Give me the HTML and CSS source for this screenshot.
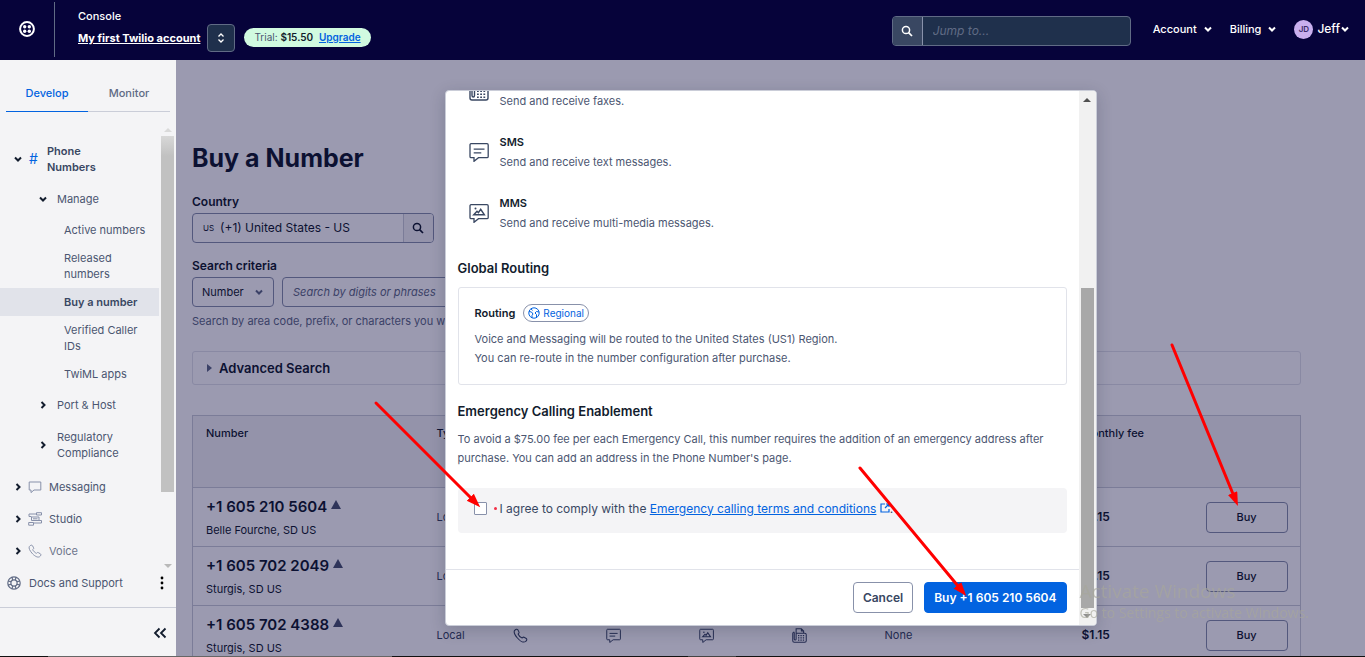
FILE: index.html
```html
<!DOCTYPE html>
<html lang="en">
<head>
  <meta charset="UTF-8">
  <title>Buy a Number</title>
  <meta name="viewport" content="width=device-width, initial-scale=1.0">
  <link rel="stylesheet" href="styles.css">
</head>
<body>
  <!-- shared icons -->
  <svg class="defs" width="0" height="0" aria-hidden="true">
    <symbol id="chevron" viewBox="0 0 10 10"><path d="M2 3.5 L5 6.5 L8 3.5" fill="none" stroke="currentColor" stroke-width="2"/></symbol>
    <symbol id="search" viewBox="0 0 12 12"><circle cx="5" cy="5" r="3.6" fill="none" stroke="currentColor" stroke-width="1.5"/><path d="M7.6 7.6 L11 11" stroke="currentColor" stroke-width="1.7"/></symbol>
    <symbol id="phone" viewBox="0 0 20 20"><path d="M2 3.5 C3.5 1.5 5.5 1 6.5 2.5 L8 5.5 C8.5 6.8 7.5 7.3 6.8 8 C7.5 10 10 12.5 12.2 13.3 C13 12.5 13.6 11.7 14.7 12.3 L17.7 14 C19 15 18.4 17 16.5 18.2 C13.5 20 8.5 16.5 5.6 13 C2.8 9.6 0.5 6 2 3.5 Z" fill="none" stroke="currentColor" stroke-width="1.4"/></symbol>
    <symbol id="sms" viewBox="0 0 20 20"><path d="M2 1.7 H18 Q19.2 1.7 19.2 3 V14.5 Q19.2 15.7 18 15.7 H9.5 L5 19.3 V15.7 H2 Q1 15.7 1 14.5 V3 Q1 1.7 2 1.7 Z M4.7 7.2 H15.5 M4.7 10.8 H12.3" fill="none" stroke="currentColor" stroke-width="1.3"/></symbol>
    <symbol id="mms" viewBox="0 0 20 20"><path d="M2 1.7 H18 Q19.2 1.7 19.2 3 V14.5 Q19.2 15.7 18 15.7 H9.5 L5 19.3 V15.7 H2 Q1 15.7 1 14.5 V3 Q1 1.7 2 1.7 Z" fill="none" stroke="currentColor" stroke-width="1.3"/><path d="M4.8 11.7 L8 8.3 L9.4 9.7 L11.7 6.3 L15.3 11.7 Z" fill="none" stroke="currentColor" stroke-width="1.5"/><circle cx="6.5" cy="5.5" r="1" fill="currentColor"/></symbol>
    <symbol id="fax" viewBox="0 0 20 20"><path d="M5.5 7 V1 H12.5 L15.5 4 V7 M12.5 1 V4 H15.5 M3 5.5 Q1 5.5 1 7.5 V17 Q1 19 3 19 H17 Q19 19 19 17 V9 Q19 7 17 7 H5.5 V14.5 Q5.5 16 4.3 16 Q3 16 3 14.5 V5.5" fill="none" stroke="currentColor" stroke-width="1.4"/><path d="M8 10.2 H17 M8 13.2 H17 M8 16.2 H17" stroke="currentColor" stroke-width="1.6" stroke-dasharray="1.8 1.4"/></symbol>
  </svg>

  <header class="topbar">
    <a class="logo" href="#" aria-label="Home">
      <svg width="16" height="16" viewBox="0 0 16 16"><circle cx="8" cy="8" r="6.9" fill="none" stroke="#fff" stroke-width="2"/><circle cx="5.7" cy="5.7" r="1.7" fill="#fff"/><circle cx="10.3" cy="5.7" r="1.7" fill="#fff"/><circle cx="5.7" cy="10.3" r="1.7" fill="#fff"/><circle cx="10.3" cy="10.3" r="1.7" fill="#fff"/></svg>
    </a>
    <div class="account">
      <span class="account-label">Console</span>
      <a class="account-name" href="#">My first Twilio account</a>
    </div>
    <button class="switcher" aria-label="Switch account">
      <svg width="10" height="12" viewBox="0 0 10 12"><path d="M2.5 4.5 L5 2 L7.5 4.5 M2.5 7.5 L5 10 L7.5 7.5" fill="none" stroke="#fff" stroke-width="1.3"/></svg>
    </button>
    <div class="trial">Trial: <b>$15.50</b> <a href="#">Upgrade</a></div>
    <div class="jump">
      <label for="jump" aria-label="Jump to"><svg width="12" height="12"><use href="#search"/></svg></label>
      <input type="text" id="jump" placeholder="Jump to...">
    </div>
    <button class="top-menu">Account <svg width="10" height="10"><use href="#chevron"/></svg></button>
    <button class="top-menu">Billing <svg width="10" height="10"><use href="#chevron"/></svg></button>
    <button class="top-menu user"><span class="avatar">JD</span>Jeff <svg width="10" height="10"><use href="#chevron"/></svg></button>
  </header>

  <div class="shell">
    <aside class="sidebar">
      <div class="tabs">
        <a class="tab active" href="#">Develop</a>
        <a class="tab" href="#">Monitor</a>
      </div>
      <div class="nav-wrap">
        <nav class="nav">
          <a class="item strong" href="#"><svg class="chev" width="10" height="10"><use href="#chevron"/></svg><span class="hash">#</span><span>Phone Numbers</span></a>
          <a class="item level2" href="#"><svg class="chev" width="10" height="10"><use href="#chevron"/></svg><span>Manage</span></a>
          <div class="sub">
            <a href="#">Active numbers</a>
            <a href="#">Released numbers</a>
            <a class="current" href="#">Buy a number</a>
            <a href="#">Verified Caller IDs</a>
            <a href="#">TwiML apps</a>
          </div>
          <a class="item level2" href="#"><svg class="chev right" width="10" height="10"><use href="#chevron"/></svg><span>Port &amp; Host</span></a>
          <a class="item level2" href="#"><svg class="chev right" width="10" height="10"><use href="#chevron"/></svg><span>Regulatory Compliance</span></a>
          <div class="products">
            <a class="item" href="#"><svg class="chev right" width="10" height="10"><use href="#chevron"/></svg><svg class="picto" width="14" height="14" viewBox="0 0 14 14"><path d="M1.2 2 H12.8 V10 H6 L3 12.6 V10 H1.2 Z" fill="none" stroke="currentColor" stroke-linejoin="round"/></svg><span>Messaging</span></a>
            <a class="item" href="#"><svg class="chev right" width="10" height="10"><use href="#chevron"/></svg><svg class="picto" width="14" height="14" viewBox="0 0 14 14"><path d="M8.5 .7 H13.5 V3 H8.5 Z M8.5 2 H1 V4.5 H3.5 M3.5 5 H11 V8.5 H3.5 Z M5 6.8 H9.5 M11 8.5 H13.5 V11 H5.5 M.7 10.5 H5.5 V13.2 H.7 Z" fill="none" stroke="currentColor"/></svg><span>Studio</span></a>
            <a class="item faded" href="#"><svg class="chev right" width="10" height="10"><use href="#chevron"/></svg><svg class="picto" width="14" height="14"><use href="#phone"/></svg><span>Voice</span></a>
          </div>
        </nav>
        <div class="nav-scroll"><i class="up"></i><i class="thumb"></i><i class="down"></i></div>
      </div>
      <div class="docs">
        <svg width="14" height="14" viewBox="0 0 14 14"><g fill="none" stroke="#606b85" stroke-width="1.2"><circle cx="7" cy="7" r="6.2"/><circle cx="7" cy="7" r="3.1"/><path d="M5 .9 L5.6 4 M9 .9 L8.4 4 M5 13.1 L5.6 10 M9 13.1 L8.4 10 M.9 5 L4 5.6 M.9 9 L4 8.4 M13.1 5 L10 5.6 M13.1 9 L10 8.4"/></g></svg>
        <a href="#">Docs and Support</a>
        <button aria-label="More"><svg width="4" height="14" viewBox="0 0 4 14"><circle cx="2" cy="2" r="1.4"/><circle cx="2" cy="7" r="1.4"/><circle cx="2" cy="12" r="1.4"/></svg></button>
      </div>
      <div class="collapse">
        <button aria-label="Collapse menu"><svg width="14" height="12" viewBox="0 0 14 12"><path d="M6.5 1.5 L2 6 L6.5 10.5 M12.5 1.5 L8 6 L12.5 10.5" fill="none" stroke="#121c2d" stroke-width="1.8"/></svg></button>
      </div>
    </aside>

    <div class="stage">
      <main class="page">
        <h1>Buy a Number</h1>
        <label class="field-label" for="country">Country</label>
        <div class="country">
          <span>US</span>
          <input type="text" id="country" value="(+1) United States - US">
          <button aria-label="Search country"><svg width="12" height="12"><use href="#search"/></svg></button>
        </div>
        <label class="field-label" for="digits">Search criteria</label>
        <div class="criteria">
          <div class="select">
            <select aria-label="Search by"><option>Number</option></select>
            <svg width="10" height="10"><use href="#chevron"/></svg>
          </div>
          <input type="text" id="digits" placeholder="Search by digits or phrases">
        </div>
        <p class="help">Search by area code, prefix, or characters you want in your phone number.</p>
        <details class="advanced"><summary>Advanced Search</summary></details>

        <table class="numbers">
          <thead>
            <tr>
              <th class="c-number">Number</th><th class="c-type">Type</th><th class="c-cap" aria-label="Voice"></th><th class="c-cap" aria-label="SMS"></th><th class="c-cap" aria-label="MMS"></th><th class="c-cap" aria-label="Fax"></th><th aria-label="Address"></th><th class="c-fee">Monthly fee</th><th class="c-buy"></th>
            </tr>
          </thead>
          <tbody>
            <tr>
              <td><div class="num">+1 605 210 5604<i></i></div><div class="place">Belle Fourche, SD US</div></td>
              <td>Local</td>
              <td><svg width="15" height="15"><use href="#phone"/></svg></td><td><svg width="15" height="15"><use href="#sms"/></svg></td><td><svg width="15" height="15"><use href="#mms"/></svg></td><td><svg width="15" height="15"><use href="#fax"/></svg></td>
              <td>None</td><td class="fee">$1.15</td><td><button>Buy</button></td>
            </tr>
            <tr>
              <td><div class="num">+1 605 702 2049<i></i></div><div class="place">Sturgis, SD US</div></td>
              <td>Local</td>
              <td><svg width="15" height="15"><use href="#phone"/></svg></td><td><svg width="15" height="15"><use href="#sms"/></svg></td><td><svg width="15" height="15"><use href="#mms"/></svg></td><td><svg width="15" height="15"><use href="#fax"/></svg></td>
              <td>None</td><td class="fee">$1.15</td><td><button>Buy</button></td>
            </tr>
            <tr>
              <td><div class="num">+1 605 702 4388<i></i></div><div class="place">Sturgis, SD US</div></td>
              <td>Local</td>
              <td><svg width="15" height="15"><use href="#phone"/></svg></td><td><svg width="15" height="15"><use href="#sms"/></svg></td><td><svg width="15" height="15"><use href="#mms"/></svg></td><td><svg width="15" height="15"><use href="#fax"/></svg></td>
              <td>None</td><td class="fee">$1.15</td><td><button>Buy</button></td>
            </tr>
          </tbody>
        </table>
      </main>

      <div class="overlay">
        <div class="modal" role="dialog" aria-label="Buy +1 605 210 5604">
          <div class="modal-content">
            <div class="modal-body">
              <div class="caps">
                <div class="cap"><svg width="20" height="20"><use href="#fax"/></svg><div><b>Fax</b><p>Send and receive faxes.</p></div></div>
                <div class="cap"><svg width="20" height="20"><use href="#sms"/></svg><div><b>SMS</b><p>Send and receive text messages.</p></div></div>
                <div class="cap"><svg width="20" height="20"><use href="#mms"/></svg><div><b>MMS</b><p>Send and receive multi-media messages.</p></div></div>
              </div>
              <h2>Global Routing</h2>
              <div class="card">
                <div class="card-title">Routing
                  <span class="pill"><svg width="12" height="12" viewBox="0 0 12 12"><g fill="none" stroke="#0263e0"><circle cx="6" cy="6" r="5.2"/><path d="M1 4.5 L3.5 5 L5 7 L4 8.5 L4 10.8 M3 1.8 L4.5 3.5 M11 5 L8.5 4.5 L7 6 L8.5 7.5 L8.5 10.3"/></g></svg>Regional</span>
                </div>
                <p>Voice and Messaging will be routed to the United States (US1) Region.<br>You can re-route in the number configuration after purchase.</p>
              </div>
              <h2>Emergency Calling Enablement</h2>
              <p class="fee-note">To avoid a $75.00 fee per each Emergency Call, this number requires the addition of an emergency address after purchase. You can add an address in the Phone Number's page.</p>
              <div class="agree">
                <input type="checkbox" id="agree">
                <span class="dot"></span>
                <label for="agree">I agree to comply with the <a href="#">Emergency calling terms and conditions</a> <svg width="10" height="10" viewBox="0 0 10 10"><path d="M5 1 H1 V9 H9 V6 M6 1 H9 V4 M9 1 L5 5" fill="none" stroke="#0263e0" stroke-width="1.2"/></svg>.</label>
              </div>
            </div>
            <div class="modal-footer">
              <button class="cancel">Cancel</button>
              <button class="buy">Buy +1 605 210 5604</button>
            </div>
          </div>
          <div class="modal-scroll"><i class="up"></i><i class="thumb"></i><i class="down"></i></div>
        </div>
      </div>
    </div>
  </div>
  <div class="taskbar"></div>

  <div class="watermark"><div>Activate Windows</div><p>Go to Settings to activate Windows.</p></div>

  <svg class="arrows" aria-hidden="true">
    <defs>
      <marker id="head" markerUnits="userSpaceOnUse" markerWidth="16" markerHeight="12" refX="1" refY="5" orient="auto"><path d="M0 0 L14 5 L0 10 Z" fill="#f00"/></marker>
    </defs>
    <g stroke="#f00" stroke-width="3" stroke-linecap="round">
      <line x1="376" y1="403" x2="471" y2="498" marker-end="url(#head)"/>
      <line x1="860" y1="468" x2="958" y2="586" marker-end="url(#head)"/>
      <line x1="1172" y1="345" x2="1233" y2="494" marker-end="url(#head)"/>
    </g>
  </svg>
</body>
</html>
```
FILE: styles.css
```css
* {
  box-sizing: border-box;
}
body {
  margin: 0;
  height: 100vh;
  display: flex;
  flex-direction: column;
  overflow: hidden;
  font-family: Inter, "Liberation Sans", sans-serif;
  font-size: 11px;
  line-height: 16px;
  color: #121c2d;
  background: #fff;
}
button, input, select {
  font: inherit;
  color: inherit;
}
button {
  cursor: pointer;
}
a {
  color: inherit;
  text-decoration: none;
}
h1, h2, p {
  margin: 0;
}
svg {
  display: block;
  flex: none;
}
.defs {
  position: absolute;
}

/* top bar */
.topbar {
  flex: none;
  height: 60px;
  display: flex;
  align-items: center;
  padding: 0 15px 2px 0;
  background: #06033a;
  color: #fff;
}
.logo {
  width: 55px;
  height: 55px;
  padding-left: 19px;
  display: flex;
  align-items: center;
  border-right: 1px solid #606b85;
}
.account {
  display: flex;
  flex-direction: column;
  gap: 6px;
  margin-left: 23px;
  padding-bottom: 5px;
}
.account-label {
  font-weight: 500;
}
.account-name {
  font-weight: 700;
  text-decoration: underline;
}
.switcher {
  width: 28px;
  height: 28px;
  margin: 18px 9px 0 7px;
  padding: 0;
  display: flex;
  align-items: center;
  justify-content: center;
  border: 1px solid #606b85;
  border-radius: 4px;
  background: #1f304c;
}
.trial {
  height: 19px;
  margin-top: 17px;
  padding: 0 10px;
  font-size: 10px;
  line-height: 19px;
  border-radius: 10px;
  background: #d1fae0;
  color: #4b5671;
}
.trial b {
  color: #121c2d;
  font-weight: 600;
}
.trial a {
  margin-left: 3px;
  color: #0263e0;
  font-weight: 600;
  text-decoration: underline;
}
.jump {
  width: 239px;
  height: 30px;
  margin: 4px 22px 0 auto;
  display: flex;
  border: 1px solid #606b85;
  border-radius: 4px;
  background: #1f304c;
  overflow: hidden;
}
.jump label {
  width: 30px;
  display: flex;
  align-items: center;
  justify-content: center;
  border-right: 1px solid #8891aa;
  background: #394762;
}
.jump input {
  flex: 1;
  min-width: 0;
  padding: 0 10px;
  border: 0;
  background: none;
  font-size: 12px;
}
.jump input::placeholder {
  color: #606b85;
  font-style: italic;
}
.top-menu {
  display: flex;
  align-items: center;
  gap: 6px;
  margin-right: 17px;
  padding: 0;
  border: 0;
  background: none;
  font-weight: 500;
}
.user {
  gap: 0;
  margin-right: 0;
  font-size: 12px;
}
.avatar {
  width: 19px;
  height: 19px;
  margin-right: 4px;
  line-height: 19px;
  border-radius: 50%;
  background: #c9b0ef;
  color: #3a2b6b;
  font-size: 8px;
  font-weight: 600;
  text-align: center;
}

/* sidebar */
.shell {
  flex: 1;
  min-height: 0;
  display: flex;
}
.sidebar {
  width: 176px;
  flex: none;
  display: flex;
  flex-direction: column;
  background: #f4f4f6;
}
.tabs {
  display: flex;
  margin: 16px 6px 12px;
  border-bottom: 1px solid #cacdd8;
}
.tab {
  flex: 1;
  padding: 9px 0 10px;
  text-align: center;
  font-weight: 500;
  color: #606b85;
}
.tab.active {
  margin-bottom: -1px;
  color: #0263e0;
  border-bottom: 1px solid #0263e0;
}
.nav-wrap {
  flex: 1;
  min-height: 0;
  display: flex;
}
.nav {
  flex: 1;
  padding-top: 11px;
  overflow: hidden;
  color: #4b5671;
}
.item {
  display: flex;
  align-items: center;
  padding: 8px 0 8px 13px;
}
.item.strong {
  padding-right: 40px;
  color: #394762;
  font-weight: 600;
}
.item.level2 {
  padding-left: 38px;
}
.chev {
  color: #121c2d;
}
.chev.right {
  transform: rotate(-90deg);
}
.hash {
  flex: none;
  width: 24px;
  padding-left: 6px;
  color: #0263e0;
  font-size: 14px;
  font-weight: 400;
}
.level2 .chev {
  margin-right: 9px;
}
.picto {
  margin: 0 7px 0 5px;
  color: #8891aa;
}
.faded span {
  opacity: 0.8;
}
.sub {
  padding: 1px 0;
}
.sub a {
  display: block;
  padding: 6px 12px 6px 64px;
}
.sub .current {
  background: #e1e3ea;
  color: #394762;
  font-weight: 600;
}
.products {
  padding-top: 2px;
}
.nav-scroll {
  width: 17px;
  padding: 4px 2px 0;
  display: flex;
  flex-direction: column;
  gap: 4px;
}
.nav-scroll .thumb {
  flex: 0 0 81%;
  background: linear-gradient(#d8d8d8, #c1c1c1 20px);
}
.up, .down {
  flex: none;
  width: 0;
  margin: 0 auto;
  border: 4px solid transparent;
  border-top-width: 0;
  border-bottom-color: #505050;
}
.down {
  border-width: 4px 4px 0;
  border-color: #505050 transparent transparent;
}
.nav-scroll .up {
  border-bottom-color: #dadada;
}
.nav-scroll .down {
  margin-top: auto;
  border-top-color: #b9b9b9;
}
.docs {
  display: flex;
  align-items: center;
  gap: 8px;
  padding: 7px 12px 16px 7px;
  color: #4b5671;
}
.docs button {
  margin-left: auto;
  padding: 0;
  border: 0;
  background: none;
}
.collapse {
  height: 49px;
  padding: 2px 9px 0 0;
  display: flex;
  align-items: center;
  justify-content: flex-end;
  border-top: 1px solid #cacdd8;
}
.collapse button {
  padding: 0;
  border: 0;
  background: none;
}

/* page behind the dialog */
.stage {
  flex: 1;
  min-width: 0;
  position: relative;
  overflow: hidden;
}
.page {
  padding: 80px 64px 0 16px;
}
h1 {
  margin-bottom: 16px;
  font-size: 25px;
  line-height: 36px;
  font-weight: 700;
}
.field-label {
  display: block;
  padding: 2px 0 3px;
  font-size: 12px;
  font-weight: 600;
}
.country {
  width: 242px;
  height: 30px;
  margin-bottom: 13px;
  padding-left: 10px;
  display: flex;
  align-items: center;
  gap: 6px;
  border: 1px solid #8891aa;
  border-radius: 4px;
  overflow: hidden;
}
.country span {
  font-size: 8px;
}
.country input {
  flex: 1;
  min-width: 0;
  padding: 0;
  border: 0;
  background: none;
  font-size: 12px;
}
.country button {
  width: 30px;
  height: 30px;
  padding: 0 8px;
  border: 0;
  border-left: 1px solid #cacdd8;
  background: #f4f4f6;
}
.criteria {
  display: flex;
  gap: 8px;
}
.select {
  position: relative;
  color: #121c2d;
}
.select select {
  appearance: none;
  width: 82px;
  height: 30px;
  padding: 0 9px;
  border: 1px solid #8891aa;
  border-radius: 4px;
  background: none;
}
.select svg {
  position: absolute;
  right: 10px;
  top: 10px;
  color: #606b85;
}
.criteria input {
  width: 242px;
  height: 30px;
  padding: 0 10px;
  border: 1px solid #8891aa;
  border-radius: 4px;
  background: none;
}
.criteria input::placeholder {
  color: #606b85;
  font-style: italic;
}
.help {
  padding: 6px 0 22px;
  color: #606b85;
}
.advanced {
  margin-bottom: 30px;
  border: 1px solid #e1e3ea;
  border-radius: 3px;
  font-size: 13px;
  font-weight: 600;
}
.advanced summary {
  padding: 8px 14px;
  display: flex;
  align-items: center;
  gap: 7px;
}
.advanced summary::before {
  content: "";
  border: 4px solid transparent;
  border-left: 5px solid #606b85;
  border-right: 0;
}
.numbers {
  width: 100%;
  table-layout: fixed;
  border-collapse: collapse;
  border: 1px solid #cacdd8;
}
.numbers th {
  height: 72px;
  padding: 9px 13px;
  vertical-align: top;
  text-align: left;
  font-weight: 500;
  background: #f4f4f6;
}
.numbers td {
  height: 59px;
  padding: 0 13px;
  border-top: 1px solid #cacdd8;
  color: #394762;
}
.c-number { width: 231px; }
.c-type { width: 76px; }
.c-cap { width: 93px; }
.c-fee { width: 124px; }
.c-buy { width: 108px; }
.num {
  display: flex;
  gap: 4px;
  color: #121c2d;
  font-size: 15px;
  line-height: 20px;
  font-weight: 600;
}
.num i {
  align-self: flex-start;
  margin-top: 3px;
  border: 5px solid transparent;
  border-top: 0;
  border-bottom: 9px solid #4b5671;
}
.place {
  margin-top: 5px;
  color: #121c2d;
}
.numbers .fee {
  color: #121c2d;
  font-size: 12px;
  font-weight: 600;
}
.numbers button {
  width: 82px;
  height: 31px;
  border: 1px solid #8891aa;
  border-radius: 4px;
  background: none;
  color: #121c2d;
  font-weight: 500;
}

/* dialog */
.overlay {
  position: absolute;
  inset: 0;
  display: flex;
  align-items: center;
  justify-content: center;
  background: rgba(6, 3, 58, 0.4);
}
.modal {
  width: 90%;
  max-width: 652px;
  height: 90%;
  display: flex;
  border: 1px solid #cacdd8;
  border-radius: 4px;
  overflow: hidden;
  background: #fff;
  box-shadow: 0 4px 16px rgba(18, 28, 45, 0.2);
}
.modal-content {
  flex: 1;
  min-width: 0;
  display: flex;
  flex-direction: column;
  color: #4b5671;
}
.modal-body {
  flex: 1;
  min-height: 0;
  padding: 0 12px 36px;
  display: flex;
  flex-direction: column;
  justify-content: flex-end;
  overflow: hidden;
}
.modal-body > * {
  flex: none;
}
.caps {
  display: flex;
  flex-direction: column;
  gap: 21px;
  margin-bottom: 25px;
}
.cap {
  display: flex;
  align-items: center;
  gap: 11px;
  padding-left: 11px;
  line-height: 20px;
}
.cap svg {
  color: #394762;
}
.cap b {
  color: #121c2d;
  font-weight: 600;
}
h2 {
  margin-bottom: 9px;
  color: #121c2d;
  font-size: 13px;
  line-height: 20px;
  font-weight: 600;
}
.card {
  margin-bottom: 16px;
  padding: 16px;
  border: 1px solid #e1e3ea;
  border-radius: 3px;
  line-height: 19px;
}
.card-title {
  display: flex;
  align-items: center;
  gap: 8px;
  margin-bottom: 8px;
  line-height: 18px;
  color: #121c2d;
  font-weight: 600;
}
.pill {
  height: 18px;
  padding: 0 4px;
  display: flex;
  align-items: center;
  gap: 3px;
  border: 1px solid #8891aa;
  border-radius: 9px;
  color: #0263e0;
  font-size: 10px;
  font-weight: 400;
}
.fee-note {
  margin-bottom: 20px;
  line-height: 19px;
}
.agree {
  height: 45px;
  padding: 0 16px 4px;
  display: flex;
  align-items: center;
  border-radius: 4px;
  background: #f4f4f6;
  color: #394762;
  font-size: 12px;
}
.agree input {
  appearance: none;
  width: 13px;
  height: 13px;
  margin: 0;
  border: 1px solid #8891aa;
  border-radius: 1px;
  background: #fff;
}
.dot {
  width: 3px;
  height: 3px;
  margin: 0 3px 0 7px;
  border-radius: 50%;
  background: #f22f46;
}
.agree a {
  color: #0263e0;
  text-decoration: underline;
}
.agree svg {
  display: inline-block;
}
.modal-footer {
  padding: 12px;
  display: flex;
  justify-content: flex-end;
  gap: 11px;
  border-top: 1px solid #e1e3ea;
}
.modal-footer button {
  height: 31px;
  padding: 0 9px;
  border: 1px solid #8891aa;
  border-radius: 4px;
  background: #fff;
  color: #394762;
  font-size: 12px;
  font-weight: 600;
}
.modal-footer .buy {
  border-color: #0263e0;
  background: #0263e0;
  color: #fff;
}
.modal-scroll {
  width: 17px;
  padding: 7px 2px;
  display: flex;
  flex-direction: column;
  background: #f1f1f1;
}
.modal-scroll .thumb {
  flex: 0 0 320px;
  margin-top: auto;
  margin-bottom: 6px;
  background: #a8a8a8;
}
.modal-scroll .down {
  border-top-color: #909090;
}

.taskbar {
  flex: none;
  height: 1px;
  background: linear-gradient(90deg, #111 48px, #666 48px, #666 392px, #111 392px, #111 688px, #444 688px, #444 736px, #111 736px);
}
.watermark {
  position: fixed;
  right: 56px;
  bottom: 34px;
  font-family: "Open Sans", sans-serif;
  font-size: 14px;
  line-height: 20px;
  color: rgba(167, 167, 155, 0.66);
}
.watermark div {
  font-size: 19px;
  line-height: 24px;
}
.arrows {
  position: fixed;
  inset: 0;
  width: 100%;
  height: 100%;
  pointer-events: none;
}
```
